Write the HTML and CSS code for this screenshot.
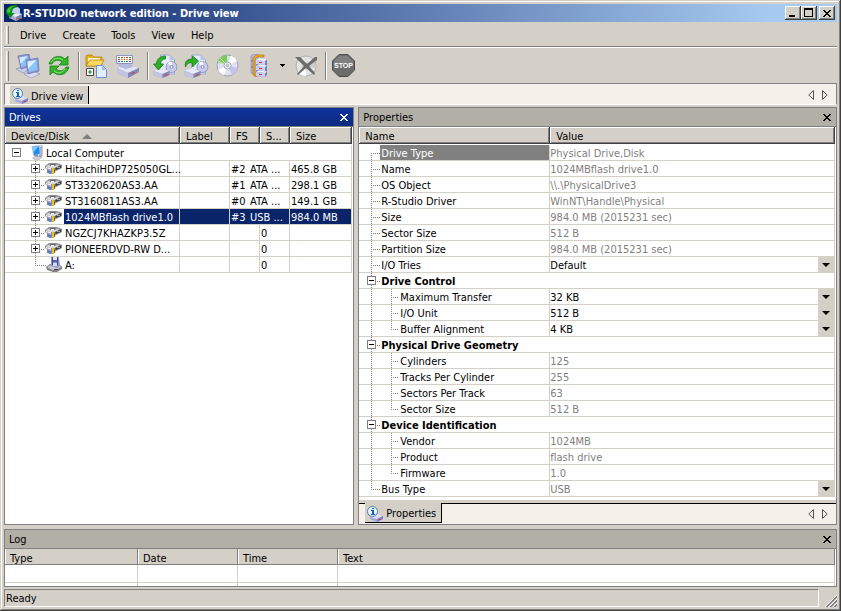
FILE: index.html
```html
<!DOCTYPE html>
<html lang="en">
<head>
    <meta charset="UTF-8">
    <meta name="viewport" content="width=device-width, initial-scale=1.0">
    <title>R-STUDIO network edition - Drive view</title>
    <link rel="stylesheet" href="styles.css">
</head>
<body>

<svg class="sprites" aria-hidden="true">
    <symbol id="hdd" viewBox="0 0 17 13">
        <path d="M0 4L4 1h8l5 2v3l-6 3-4 3-5-1V7L0 6z" fill="#8a8a90"/>
        <path d="M1 4l4-2h6l4 2-5 2H5z" fill="#d8d8de"/>
        <path d="M5 2h5l2 1-3 1H6L4 3z" fill="#68686e"/>
        <path d="M6 3h3v1H6z" fill="#f4f4f8"/>
        <path d="M10 6l6-3v3l-5 2z" fill="#44444a"/>
        <path d="M12 5h3v1h-3z" fill="#a8a8b0"/>
        <path d="M1 5l5 1v2L1 6z" fill="#f0f0f4"/>
        <path d="M3 7l3 1v4l-3-1z" fill="#5c78d0"/>
        <path d="M3 7l3 1v1L3 8z" fill="#a8b8f0"/>
        <path d="M7 6h2v6H7z" fill="#f0c020"/>
        <path d="M9 7h1v4H9z" fill="#80621c"/>
    </symbol>
    <symbol id="floppy" viewBox="0 0 16 15">
        <path d="M0 10l4-3h9l3 3v2l-5 3H7L1 13z" fill="#808086"/>
        <path d="M1 10l4-2h7l3 2-5 3H6z" fill="#c8c8ce"/>
        <path d="M5 0h8l1 9-3 2-6-2z" fill="#9098d0"/>
        <path d="M6 0h1v8H6zM11 0h1v8h-1z" fill="#38428c"/>
        <path d="M7 0h4v3H7z" fill="#e4e8fa"/>
        <path d="M7 3h4v2H7z" fill="#5560b0"/>
        <path d="M7 6h4v3H7z" fill="#d8dcf4"/>
        <path d="M8 12h4v1H8z" fill="#444"/>
    </symbol>
    <symbol id="computer" viewBox="0 0 14 16">
        <path d="M9 1l4-1v12l-4 2z" fill="#a8aab8"/>
        <path d="M9 1l2-1h2l-2 2z" fill="#dcdce6"/>
        <path d="M1 1l9-1 1 10-8 2z" fill="#b8cce8"/>
        <path d="M2 2l7-1 1 8-6 2z" fill="#1c8cf0"/>
        <path d="M2 2l7-1-6 7z" fill="#7ccaff"/>
        <path d="M4 11l4-1 1 3H5z" fill="#8890a4"/>
        <path d="M2 14l4-2 6 1-3 3H6z" fill="#d0d4dc" stroke="#9098a8" stroke-width=".5"/>
    </symbol>
    <symbol id="driveinfo" viewBox="0 0 17 16">
        <path d="M3 11l6-4 7 3v3l-6 3-7-3z" fill="#a4a8d8"/>
        <path d="M3 11l6-4 7 3-6 3z" fill="#dcdef4"/>
        <path d="M10 13l6-3v3l-6 3z" fill="#8084c0"/>
        <path d="M12 13h2v1h-2z" fill="#e03020"/>
        <circle cx="5.500" cy="5.500" r="5" fill="#eaf4fc" stroke="#5878a0"/>
        <path d="M5 2h2v1H5zM4 4h3v4h1v1H4V8h1V5H4z" fill="#0c60d0"/>
    </symbol>
    <symbol id="drivedisc" viewBox="0 0 24 24">
        <path d="M7 1h9l5 5v14H7z" fill="#e6ecfc" stroke="#98a8d4" stroke-width="1"/>
        <path d="M16 1l5 5h-5z" fill="#b4c4ec"/>
        <circle cx="18" cy="13" r="5.500" fill="#c8ccec" stroke="#9094c0"/>
        <path d="M18 13l-4-4a6 6 0 0 1 5-1z" fill="#f8f8ff"/>
        <circle cx="18" cy="13" r="1.500" fill="#fff" stroke="#8c90bc"/>
        <path d="M0 17l7-3 9 3v4l-7 3-9-3z" fill="#9a9cc8"/>
        <path d="M0 17l7-3 9 3-7 3z" fill="#e8eafa"/>
        <path d="M0 17l9 3v4l-9-3z" fill="#c4c6e6"/>
        <path d="M9 20l7-3v4l-7 3z" fill="#8688b8"/>
        <path d="M11 21l3-1v1l-3 1z" fill="#e03428"/>
    </symbol>
    <symbol id="cross" viewBox="0 0 8 7" shape-rendering="crispEdges">
        <path d="M0 0h2v1h1v1h2V1h1V0h2v1H7v1H6v1H5v1h1v1h1v1h1v1H6V6H5V5H3v1H2v1H0V6h1V5h1V4h1V3H2V2H1V1H0z" fill="currentColor"/>
    </symbol>
    <symbol id="prev" viewBox="0 0 6 10">
        <path d="M5.500 .5v9L.8 5z" fill="none" stroke="#555"/>
    </symbol>
    <symbol id="next" viewBox="0 0 6 10">
        <path d="M.5 .5v9L5.200 5z" fill="none" stroke="#555"/>
    </symbol>
</svg>

<div class="window">
    <header class="titlebar">
        <svg class="app-icon" width="16" height="16" viewBox="0 0 16 16">
            <path d="M3 10l5-3 8 2v4l-6 3-7-3z" fill="#a8acc8"/>
            <path d="M3 10l5-3 8 2-6 3z" fill="#eceefa"/>
            <path d="M10 12l6-3v4l-6 3z" fill="#8084a8"/>
            <path d="M12 13h2v1h-2z" fill="#e03020"/>
            <path d="M6 3l6-1 2 2v5H6z" fill="#c0d0f0"/>
            <path d="M0 7C0 3 4 0 10 0l2 1-2 1C7 3 6 5 6 8h3l-5 5-4-5z" fill="#0c8c18"/>
            <path d="M1 7c0-3 3-6 8-6-4 1-5 3-5 7z" fill="#48cc40"/>
        </svg>
        <h1>R-STUDIO network edition - Drive view</h1>
        <div class="window-buttons">
            <button aria-label="Minimize"><svg width="12" height="10" viewBox="0 0 12 10"><path d="M2 7h6v2H2z"/></svg></button>
            <button aria-label="Maximize"><svg width="12" height="10" viewBox="0 0 12 10" shape-rendering="crispEdges"><path d="M1 0h9v9H1zM2 2v6h7V2z" fill-rule="evenodd"/></svg></button>
            <button class="close" aria-label="Close"><svg width="8" height="7"><use href="#cross"/></svg></button>
        </div>
    </header>

    <nav class="menubar">
        <span class="grip"></span>
        <button>Drive</button>
        <button>Create</button>
        <button>Tools</button>
        <button>View</button>
        <button>Help</button>
    </nav>

    <div class="toolbar" role="toolbar">
        <span class="grip"></span>
        <button aria-label="Connect to remote">
            <svg width="24" height="24" viewBox="0 0 24 24">
                <path d="M0 15l8-3 6 3-7 4z" fill="#c8cce8" stroke="#8088b8" stroke-width=".6"/>
                <path d="M2 2l11-2 2 12-10 3z" fill="#8c98d0" stroke="#5c68a8" stroke-width=".6"/>
                <path d="M3.500 3.500l8-1.500 2 9-8 2z" fill="#88c4fa"/>
                <path d="M3.500 3.500l8-1.500-7 8z" fill="#d4ecff"/>
                <path d="M8 20l9-3 7 3-9 4z" fill="#dcdef0" stroke="#8088b8" stroke-width=".6"/>
                <path d="M10 6l12-2 1 13-11 3z" fill="#8c98d0" stroke="#5c68a8" stroke-width=".6"/>
                <path d="M11.500 7.500l9-1.500 1 10-8.500 2z" fill="#88c4fa"/>
                <path d="M11.500 7.500l9-1.500-8.500 9z" fill="#dcf0ff"/>
            </svg>
        </button>
        <button aria-label="Refresh">
            <svg width="22" height="22" viewBox="0 0 22 22">
                <path d="M1 9C3 3 8 0 14 2l3 2 3-3v9h-9l3-3C10 4 6 5 4 9z" fill="#34b428" stroke="#16801a" stroke-width=".8"/>
                <path d="M21 12c-2 7-8 9-13 7l-3-2-3 3v-9h9l-3 3c4 3 8 2 10-2z" fill="#34b428" stroke="#16801a" stroke-width=".8"/>
                <path d="M3 7c3-4 8-5 12-2M6 16c4 3 8 2 11-2" fill="none" stroke="#90e478"/>
            </svg>
        </button>
        <span class="separator"></span>
        <button aria-label="Open image">
            <svg width="23" height="24" viewBox="0 0 23 24">
                <path d="M1 12V2l1-1h5l2 2h8v9z" fill="#e8ac20" stroke="#b07808" stroke-width=".7"/>
                <path d="M3 4h12v4H3z" fill="#fff6c0"/>
                <path d="M1 12l4-6h14l-3 6z" fill="#ffd860" stroke="#b07808" stroke-width=".7"/>
                <path d="M1.500 14.500h7v7h-7z" fill="#fff" stroke="#444"/>
                <path d="M4.500 16h1v1.500H7v1H5.500V20h-1v-1.500H3v-1h1.500z" fill="#208020"/>
                <path d="M11.500 11.500h6l4 4v8h-10z" fill="#e2eeff" stroke="#6c90d8"/>
                <path d="M17 12v4h4z" fill="#98b8ec"/>
            </svg>
        </button>
        <button aria-label="Create RAID">
            <svg width="25" height="24" viewBox="0 0 25 24">
                <path d="M2 14l9-4 13 4v4l-11 6L2 19z" fill="#9698c4"/>
                <path d="M2 14l9-4 13 4-11 5z" fill="#e4e6f8"/>
                <path d="M2 14l11 5v5L2 19z" fill="#c2c4e4"/>
                <path d="M13 19l11-5v4l-11 6z" fill="#8688b8"/>
                <path d="M16 19l4-1v1l-4 1z" fill="#e03428"/>
                <path d="M3 10h13l2 3-7 2-6-2z" fill="#b4b8dc"/>
                <path d="M1.500 1.500h16v8h-16z" fill="#f4f6ff" stroke="#8c94c0"/>
                <path d="M3 3h2v1H3zM14 3h2v1h-2zM9 3h1v1H9z" fill="#2a9a2a"/>
                <path d="M6 3h2v1H6zM11 3h2v1h-2z" fill="#d03020"/>
                <path d="M3 5h2v1H3zM9 5h1v1H9zM14 5h2v1h-2z" fill="#d03020"/>
                <path d="M6 5h2v1H6zM11 5h2v1h-2z" fill="#d8a020"/>
                <path d="M3 7h2v1H3zM9 7h1v1H9zM14 7h2v1h-2z" fill="#3858c8"/>
                <path d="M6 7h2v1H6zM11 7h2v1h-2z" fill="#2a9a2a"/>
            </svg>
        </button>
        <span class="separator"></span>
        <button aria-label="Create image">
            <svg width="25" height="24" viewBox="0 0 24 24">
                <use href="#drivedisc"/>
                <path d="M12 2C7 2 3 5 3 10H0l5 6 5-6H7c0-3 2-5 5-5z" fill="#2eb024" stroke="#127a14" stroke-width=".8"/>
            </svg>
        </button>
        <button aria-label="Restore image">
            <svg width="25" height="24" viewBox="0 0 24 24">
                <use href="#drivedisc"/>
                <path d="M1 13C0 7 3 5 8 5V2l6 5-6 6V9C4 8 2 10 1 13z" fill="#2eb024" stroke="#127a14" stroke-width=".8"/>
            </svg>
        </button>
        <button aria-label="Scan">
            <svg width="23" height="23" viewBox="0 0 23 23">
                <circle cx="11.500" cy="11.500" r="10.500" fill="#dfe2f0" stroke="#9ca0b8"/>
                <path d="M11.500 11.500L1.500 8A10.500 10.500 0 0 1 11 1z" fill="#7ccc5c"/>
                <path d="M11.500 11.500L4 4M11.500 11.500L2 7" stroke="#c4f0b0"/>
                <path d="M11.500 11.500L15 1.500A10.500 10.500 0 0 1 21 7z" fill="#fff"/>
                <path d="M11.500 11.500L22 14a10.500 10.500 0 0 1-6 7z" fill="#c4c4ea"/>
                <path d="M11.500 11.500L8 21.500A10.500 10.500 0 0 1 2 16z" fill="#fff"/>
                <circle cx="11.500" cy="11.500" r="3.500" fill="#f4f4fc" stroke="#a4a8c0"/>
                <circle cx="11.500" cy="11.500" r="1.500" fill="#d4d0c8" stroke="#8c90a8" stroke-width=".5"/>
            </svg>
        </button>
        <button aria-label="Open scan information">
            <svg width="18" height="23" viewBox="0 0 18 23">
                <path d="M1 2l3-2 4 1v20l-7-2z" fill="#b4b6dc" stroke="#8488b8" stroke-width=".6"/>
                <path d="M1 7h3M1 13h3" stroke="#6870a8"/>
                <path d="M3 4l3-3h8v2H7L5 5v16l2 1-1 1-3-2z" fill="#f0b020" stroke="#a86c08" stroke-width=".6"/>
                <path d="M6 6l3-2 8 1v16l-2 2-9-1z" fill="#7c80b8"/>
                <path d="M6 6l9 1v4l-9-1zM6 12l9 1v4l-9-1zM6 18l9 1v4l-9-1z" fill="#ccd0f4"/>
                <path d="M6 6l3-2 8 1-2 2zM6 11.500l3-1 8 1-2 1.500zM6 17.500l3-1 8 1-2 1.500z" fill="#f8f8ff"/>
                <path d="M9 8h3v1H9zM9 14h3v1H9zM9 20h3v1H9z" fill="#e02820"/>
            </svg>
        </button>
        <button class="drop" aria-label="More scan options">
            <svg width="5" height="3" viewBox="0 0 5 3" shape-rendering="crispEdges"><path d="M0 0h5v1H4v1H3v1H2V2H1V1H0z"/></svg>
        </button>
        <button aria-label="Remove scan information">
            <svg width="22" height="22" viewBox="0 0 22 22">
                <circle cx="11" cy="11" r="10" fill="#e4e4e4" stroke="#b0b0b0"/>
                <path d="M11 11L3 17a10 10 0 0 0 8 4z" fill="#fff"/>
                <path d="M11 11l8-6a10 10 0 0 1 1 8z" fill="#ccc"/>
                <circle cx="11" cy="11" r="3" fill="#f4f4f4" stroke="#aaa"/>
                <path d="M0 2h5l7 7 8-7h2v3l-8 6 6 7-1 2-8-7-8 7-1-1 7-8z" fill="#6c6c6c"/>
            </svg>
        </button>
        <span class="separator"></span>
        <button aria-label="Stop">
            <svg width="23" height="23" viewBox="0 0 23 23">
                <path d="M7 .5h9L22.500 7v9L16 22.500H7L.5 16V7z" fill="#6c6c6c" stroke="#4c4c4c"/>
                <path d="M7.500 2h8L21 7.500v3H2v-3z" fill="#808080"/>
                <text x="11.500" y="14" text-anchor="middle" class="stop-text">STOP</text>
            </svg>
        </button>
    </div>

    <div class="tabbar view-tabs">
        <button class="tab"><svg width="17" height="16"><use href="#driveinfo"/></svg>Drive view</button>
        <div class="tab-arrows">
            <button aria-label="Previous tab"><svg width="6" height="10"><use href="#prev"/></svg></button>
            <button aria-label="Next tab"><svg width="6" height="10"><use href="#next"/></svg></button>
        </div>
    </div>

    <main class="panels">
        <section class="panel drives">
            <div class="panel-title active">
                <h2>Drives</h2>
                <button aria-label="Close drives"><svg width="8" height="7"><use href="#cross"/></svg></button>
            </div>
            <table class="grid drive-table">
                <colgroup>
                    <col class="col-device"><col class="col-label"><col class="col-fs"><col class="col-start"><col>
                </colgroup>
                <thead>
                    <tr><th>Device/Disk<span class="sort"></span></th><th>Label</th><th>FS</th><th>S...</th><th>Size</th></tr>
                </thead>
                <tbody>
                    <tr>
                        <td class="root"><div class="node"><button class="toggle minus" aria-label="Collapse"></button><svg width="14" height="15"><use href="#computer"/></svg><span>Local Computer</span></div></td>
                        <td colspan="4"></td>
                    </tr>
                    <tr>
                        <td class="disk"><div class="node"><button class="toggle plus" aria-label="Expand"></button><svg width="17" height="13"><use href="#hdd"/></svg><span>HitachiHDP725050GL...</span></div></td>
                        <td></td><td colspan="2"><span class="number">#2</span>ATA ...</td><td>465.8 GB</td>
                    </tr>
                    <tr>
                        <td class="disk"><div class="node"><button class="toggle plus" aria-label="Expand"></button><svg width="17" height="13"><use href="#hdd"/></svg><span>ST3320620AS3.AA</span></div></td>
                        <td></td><td colspan="2"><span class="number">#1</span>ATA ...</td><td>298.1 GB</td>
                    </tr>
                    <tr>
                        <td class="disk"><div class="node"><button class="toggle plus" aria-label="Expand"></button><svg width="17" height="13"><use href="#hdd"/></svg><span>ST3160811AS3.AA</span></div></td>
                        <td></td><td colspan="2"><span class="number">#0</span>ATA ...</td><td>149.1 GB</td>
                    </tr>
                    <tr class="selected">
                        <td class="disk"><div class="node"><button class="toggle plus" aria-label="Expand"></button><svg width="17" height="13"><use href="#hdd"/></svg><span>1024MBflash drive1.0</span></div></td>
                        <td></td><td colspan="2"><span class="number">#3</span>USB ...</td><td>984.0 MB</td>
                    </tr>
                    <tr>
                        <td class="disk"><div class="node"><button class="toggle plus" aria-label="Expand"></button><svg width="17" height="13"><use href="#hdd"/></svg><span>NGZCJ7KHAZKP3.5Z</span></div></td>
                        <td></td><td></td><td>0</td><td></td>
                    </tr>
                    <tr>
                        <td class="disk"><div class="node"><button class="toggle plus" aria-label="Expand"></button><svg width="17" height="13"><use href="#hdd"/></svg><span>PIONEERDVD-RW D...</span></div></td>
                        <td></td><td></td><td>0</td><td></td>
                    </tr>
                    <tr>
                        <td class="disk last"><div class="node"><svg width="16" height="15"><use href="#floppy"/></svg><span>A:</span></div></td>
                        <td></td><td></td><td>0</td><td></td>
                    </tr>
                </tbody>
            </table>
        </section>

        <section class="panel properties">
            <div class="panel-title">
                <h2>Properties</h2>
                <button aria-label="Close properties"><svg width="8" height="7"><use href="#cross"/></svg></button>
            </div>
            <table class="grid prop-table">
                <colgroup><col class="col-name"><col></colgroup>
                <thead>
                    <tr><th>Name</th><th>Value</th></tr>
                </thead>
                <tbody>
                    <tr class="current"><td class="prop first"><span>Drive Type</span></td><td class="readonly">Physical Drive,Disk</td></tr>
                    <tr><td class="prop">Name</td><td class="readonly">1024MBflash drive1.0</td></tr>
                    <tr><td class="prop">OS Object</td><td class="readonly">\\.\PhysicalDrive3</td></tr>
                    <tr><td class="prop">R-Studio Driver</td><td class="readonly">WinNT\Handle\Physical</td></tr>
                    <tr><td class="prop">Size</td><td class="readonly">984.0 MB (2015231 sec)</td></tr>
                    <tr><td class="prop">Sector Size</td><td class="readonly">512 B</td></tr>
                    <tr><td class="prop">Partition Size</td><td class="readonly">984.0 MB (2015231 sec)</td></tr>
                    <tr><td class="prop"><label for="tries">I/O Tries</label></td><td class="choice"><select id="tries"><option>Default</option></select></td></tr>
                    <tr class="group"><td colspan="2"><div class="node"><button class="toggle minus" aria-label="Collapse"></button><span>Drive Control</span></div></td></tr>
                    <tr><td class="prop sub"><label for="transfer">Maximum Transfer</label></td><td class="choice"><select id="transfer"><option>32 KB</option></select></td></tr>
                    <tr><td class="prop sub"><label for="unit">I/O Unit</label></td><td class="choice"><select id="unit"><option>512 B</option></select></td></tr>
                    <tr><td class="prop sub last"><label for="buffer">Buffer Alignment</label></td><td class="choice"><select id="buffer"><option>4 KB</option></select></td></tr>
                    <tr class="group"><td colspan="2"><div class="node"><button class="toggle minus" aria-label="Collapse"></button><span>Physical Drive Geometry</span></div></td></tr>
                    <tr><td class="prop sub">Cylinders</td><td class="readonly">125</td></tr>
                    <tr><td class="prop sub">Tracks Per Cylinder</td><td class="readonly">255</td></tr>
                    <tr><td class="prop sub">Sectors Per Track</td><td class="readonly">63</td></tr>
                    <tr><td class="prop sub last">Sector Size</td><td class="readonly">512 B</td></tr>
                    <tr class="group"><td colspan="2"><div class="node"><button class="toggle minus" aria-label="Collapse"></button><span>Device Identification</span></div></td></tr>
                    <tr><td class="prop sub">Vendor</td><td class="readonly">1024MB</td></tr>
                    <tr><td class="prop sub">Product</td><td class="readonly">flash drive</td></tr>
                    <tr><td class="prop sub last">Firmware</td><td class="readonly">1.0</td></tr>
                    <tr><td class="prop end"><label for="bus">Bus Type</label></td><td class="choice readonly"><select id="bus"><option>USB</option></select></td></tr>
                </tbody>
            </table>
            <div class="tabbar bottom-tabs">
                <button class="tab"><svg width="17" height="16"><use href="#driveinfo"/></svg>Properties</button>
                <div class="tab-arrows">
                    <button aria-label="Previous tab"><svg width="6" height="10"><use href="#prev"/></svg></button>
                    <button aria-label="Next tab"><svg width="6" height="10"><use href="#next"/></svg></button>
                </div>
            </div>
        </section>
    </main>

    <section class="panel log">
        <div class="panel-title">
            <h2>Log</h2>
            <button aria-label="Close log"><svg width="8" height="7"><use href="#cross"/></svg></button>
        </div>
        <table class="grid log-table">
            <colgroup><col class="col-type"><col class="col-date"><col class="col-date"><col></colgroup>
            <thead>
                <tr><th>Type</th><th>Date</th><th>Time</th><th>Text</th></tr>
            </thead>
            <tbody>
                <tr><td></td><td></td><td></td><td></td></tr>
                <tr class="cut"><td></td><td></td><td></td><td></td></tr>
            </tbody>
        </table>
    </section>

    <footer class="statusbar">
        <div class="status">Ready</div>
        <svg width="12" height="12" viewBox="0 0 12 12">
            <path d="M0 12L12 0M4 12l8-8M8 12l4-4" stroke="#fff"/>
            <path d="M1 12L12 1M2 12L12 2M5 12l7-7M6 12l6-6M9 12l3-3M10 12l2-2" stroke="#808080"/>
        </svg>
    </footer>
</div>

</body>
</html>
```
FILE: styles.css
```css
:root {
    --face: #d4d0c8;
    --shadow: #808080;
    --dark: #404040;
    --strip: #f5f1ea;
    --navy: #0a246a;
    --dots-v: repeating-linear-gradient(to bottom, #808080 0 1px, transparent 1px 2px);
    --dots-h: repeating-linear-gradient(to right, #808080 0 1px, transparent 1px 2px);
}
* {
    box-sizing: border-box;
}
body {
    margin: 0;
    font-family: "DejaVu Sans Condensed", "DejaVu Sans", Tahoma, sans-serif;
    font-size: 11px;
    color: #000;
    background-color: var(--face);
}
button, select {
    font: inherit;
    color: inherit;
    margin: 0;
    padding: 0;
    border: none;
    background: none;
}
svg {
    display: block;
    flex: none;
}
h1, h2 {
    margin: 0;
    font-size: 11px;
    font-weight: normal;
}
.sprites {
    position: absolute;
    width: 0;
    height: 0;
}
.window {
    display: flex;
    flex-direction: column;
    min-height: 100vh;
    padding: 4px;
    box-shadow: inset -1px -1px var(--dark), inset 1px 1px var(--face), inset -2px -2px var(--shadow), inset 2px 2px #fff;
}

/* title bar */
.titlebar {
    display: flex;
    align-items: center;
    height: 18px;
    padding: 0 2px;
    color: #fff;
    background: linear-gradient(to right, #0a246a, #a6caf0 92%);
}
.titlebar h1 {
    flex: 1;
    padding-left: 1px;
    font-weight: bold;
}
.window-buttons {
    display: flex;
}
.window-buttons button {
    display: flex;
    align-items: center;
    justify-content: center;
    width: 16px;
    height: 14px;
    color: #000;
    background-color: var(--face);
    box-shadow: inset -1px -1px var(--dark), inset 1px 1px #fff, inset -2px -2px var(--shadow);
}
.window-buttons .close {
    margin-left: 2px;
}

/* menu and toolbar */
.menubar {
    display: flex;
    align-items: center;
    height: 26px;
    padding: 1px 2px 0;
    border-bottom: 1px solid #fff;
    box-shadow: inset 0 -1px var(--shadow);
}
.menubar button {
    padding: 0 8px;
}
.grip {
    width: 3px;
    height: 18px;
    margin-right: 3px;
    background-color: var(--face);
    border-right: 1px solid var(--shadow);
    border-left: 1px solid #fff;
}
.toolbar {
    display: flex;
    align-items: center;
    height: 35px;
    padding: 0 2px;
}
.toolbar .grip {
    height: 30px;
}
.toolbar button {
    display: flex;
    align-items: center;
    justify-content: center;
    width: 31px;
    height: 30px;
}
.toolbar .drop {
    width: 16px;
}
.separator {
    width: 2px;
    height: 28px;
    margin: 0 1px 0 4px;
    background-color: #fff;
    border-left: 1px solid var(--shadow);
}
.stop-text {
    font-family: "Liberation Sans Narrow", "Liberation Sans", Arial, sans-serif;
    font-size: 7px;
    font-weight: bold;
    fill: #fff;
}

/* tabs */
.tabbar {
    display: flex;
    background-color: var(--strip);
}
.view-tabs {
    height: 22px;
    padding: 2px 8px 0 5px;
    border: 1px solid var(--shadow);
    border-bottom-color: #fff;
}
.tab {
    display: flex;
    align-items: center;
    gap: 2px;
    padding: 2px 5px 0 2px;
    background-color: var(--face);
    border-right: 1px solid #000;
}
.tab-arrows {
    display: flex;
    align-items: center;
    gap: 8px;
    margin-left: auto;
}

/* panels */
.panels {
    display: flex;
    flex: 1;
    gap: 4px;
    margin: 2px 0 4px;
}
.panel {
    display: flex;
    flex-direction: column;
    background-color: #fff;
    border: 1px solid var(--shadow);
}
.drives {
    flex: 350 1 0;
}
.properties {
    flex: 479 1 0;
}
.panel-title {
    display: flex;
    align-items: center;
    justify-content: space-between;
    height: 19px;
    padding: 0 5px 0 4px;
    background-color: #b2afa7;
    border-bottom: 1px solid var(--shadow);
}
.panel-title.active {
    color: #fff;
    background: linear-gradient(#10349c, #0c2a80);
}

/* grids */
.grid {
    width: calc(100% - 1px);
    table-layout: fixed;
    border-spacing: 0;
    line-height: 13px;
}
.grid th {
    height: 18px;
    padding: 1px 6px 0;
    font-weight: normal;
    text-align: left;
    white-space: nowrap;
    background-color: var(--face);
    border-bottom: 1px solid #fff;
    box-shadow: inset -1px -1px var(--dark), inset 1px 1px #fff, inset -2px -2px var(--shadow);
}
.grid td {
    height: 16px;
    padding: 2px 0 0 1px;
    white-space: nowrap;
    border-right: 1px solid var(--face);
    border-bottom: 1px solid var(--face);
}
.col-device {
    width: 175px;
}
.col-label {
    width: 50px;
}
.col-fs, .col-start {
    width: 30px;
}
.col-name {
    width: 191px;
}
.col-type {
    width: 133px;
}
.col-date {
    width: 100px;
}
.sort {
    display: inline-block;
    margin-left: 13px;
    vertical-align: 1px;
    border: 5px solid transparent;
    border-top: none;
    border-bottom-color: var(--shadow);
}
.node {
    display: flex;
    align-items: center;
    height: 15px;
}
.node span {
    flex: 1;
    padding-top: 2px;
}
.toggle {
    flex: none;
    width: 9px;
    height: 9px;
    border: 1px solid var(--shadow);
}
.toggle.minus {
    background: linear-gradient(#000, #000) center / 5px 1px no-repeat #fff;
}
.toggle.plus {
    background: linear-gradient(#000, #000) center / 5px 1px no-repeat, linear-gradient(#000, #000) center / 1px 5px no-repeat #fff;
}

/* drive tree */
.drive-table .root {
    padding: 0 0 0 7px;
}
.root svg {
    margin: 0 2px 0 9px;
}
.drive-table .disk {
    padding: 0 0 0 26px;
    background: var(--dots-v) 30px 0 / 1px 100% no-repeat, var(--dots-h) 30px 8px / 10px 1px no-repeat;
}
.disk svg {
    margin: 0 2px 0 5px;
}
.drive-table .disk.last {
    padding-left: 36px;
    background: var(--dots-v) 30px 0 / 1px 8px no-repeat, var(--dots-h) 30px 8px / 11px 1px no-repeat;
}
.disk span {
    padding-left: 1px;
}
.number {
    display: inline-block;
    width: 19px;
}
.selected td {
    color: #fff;
    background-color: var(--navy);
}
.drive-table .selected .disk {
    background-color: #fff;
}
.selected .disk span {
    background-color: var(--navy);
}

/* property tree */
.prop-table td {
    padding-left: 0;
}
.prop-table .prop {
    padding-left: 22px;
    background: var(--dots-v) 12px 0 / 1px 100% no-repeat, var(--dots-h) 12px 8px / 9px 1px no-repeat;
}
.prop-table .first {
    padding: 0 0 0 21px;
    background: var(--dots-v) 12px 8px / 1px 8px no-repeat, var(--dots-h) 12px 8px / 9px 1px no-repeat;
}
.prop-table .sub {
    padding-left: 41px;
    background: var(--dots-v) 12px 0 / 1px 100% no-repeat, var(--dots-v) 32px 0 / 1px 100% no-repeat, var(--dots-h) 32px 8px / 8px 1px no-repeat;
}
.prop-table .sub.last {
    background: var(--dots-v) 12px 0 / 1px 100% no-repeat, var(--dots-v) 32px 0 / 1px 8px no-repeat, var(--dots-h) 32px 8px / 8px 1px no-repeat;
}
.prop-table .end {
    background: var(--dots-v) 12px 0 / 1px 8px no-repeat, var(--dots-h) 12px 8px / 9px 1px no-repeat;
}
.current .first span {
    display: block;
    padding: 2px 0 0 1px;
    color: #fff;
    background-color: var(--shadow);
}
.prop-table .group td {
    padding: 0 0 0 8px;
    font-weight: bold;
    background: var(--dots-v) 12px 0 / 1px 100% no-repeat, var(--dots-h) 12px 8px / 9px 1px no-repeat;
}
.group .toggle {
    margin-right: 5px;
}
.readonly {
    color: var(--shadow);
}
.prop-table .choice {
    position: relative;
}
.choice select {
    display: block;
    width: 100%;
    height: 13px;
    appearance: none;
}
.choice::after {
    content: "";
    position: absolute;
    top: 0;
    right: 0;
    width: 16px;
    height: 15px;
    pointer-events: none;
    background-color: var(--face);
}
.choice::before {
    content: "";
    position: absolute;
    z-index: 1;
    top: 6px;
    right: 4px;
    border: 4px solid transparent;
    border-top-color: #000;
    border-bottom: none;
    pointer-events: none;
}
.bottom-tabs {
    height: 21px;
    margin-top: auto;
    padding: 0 8px 1px 6px;
    border-top: 1px solid #000;
    box-shadow: 0 -3px var(--face);
}
.bottom-tabs .tab {
    margin-top: -1px;
    border-bottom: 1px solid #000;
}

/* log */
.log-table th {
    height: 16px;
    padding: 2px 5px 0;
    border-bottom: none;
    box-shadow: inset -1px -1px var(--shadow), inset 1px 0 #fff;
}
.log-table td {
    height: 18px;
}
.log-table .cut td {
    height: 3px;
    border-bottom: none;
}

/* status bar */
.statusbar {
    display: flex;
    align-items: flex-end;
    gap: 6px;
    margin-top: 2px;
}
.status {
    flex: 1;
    height: 18px;
    padding: 1px 0 0 1px;
    line-height: 16px;
    border: 1px solid #fff;
    border-top-color: var(--shadow);
    border-left-color: var(--shadow);
}
```
